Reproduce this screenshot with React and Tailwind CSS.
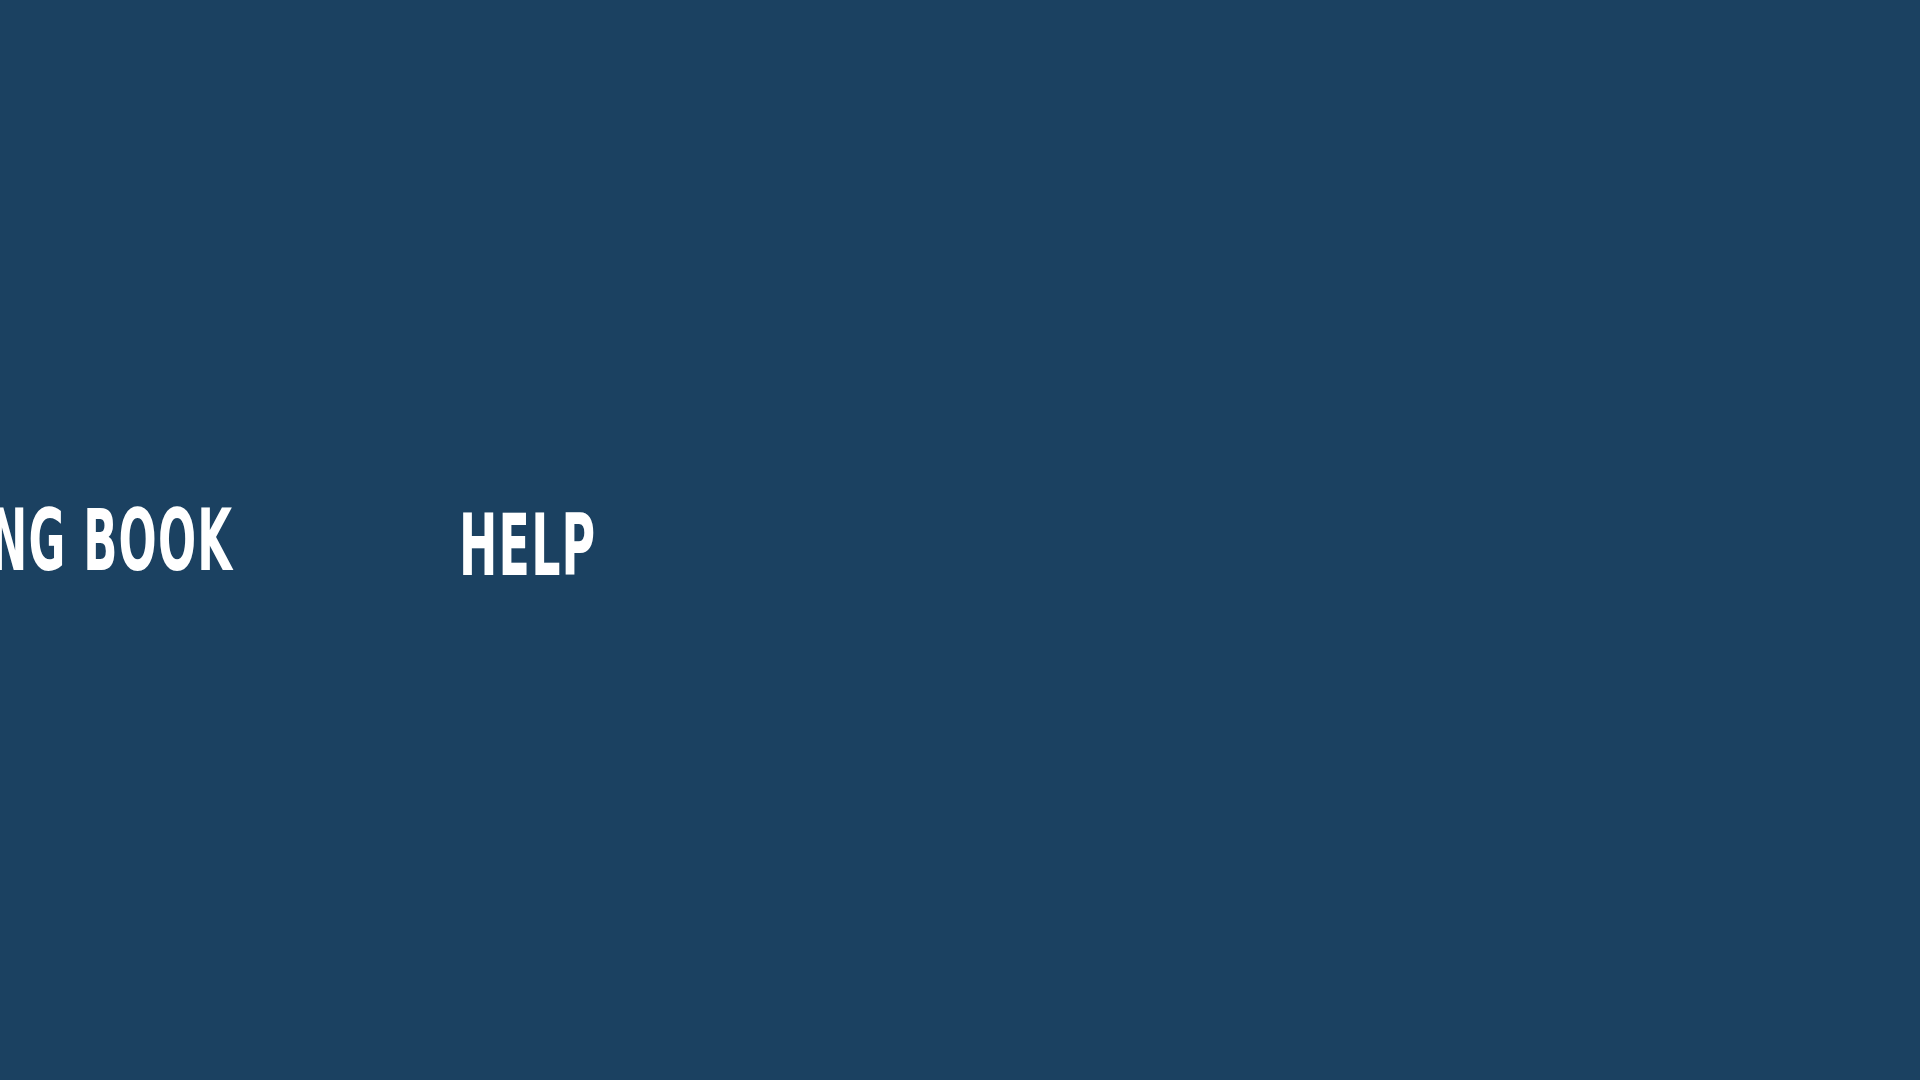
export default function App() {
  return (
    <div className="h-screen w-full overflow-hidden bg-[#1b4161] flex items-center">
      {/* marquee strip, first word runs off the left edge */}
      <div className="w-[233px] shrink-0 flex justify-end">
        <span className="inline-block whitespace-nowrap origin-right scale-x-[0.58] text-white font-bold text-[86px] leading-none tracking-[2px] font-['DejaVu_Sans_Condensed','DejaVu_Sans',sans-serif]">
          TRAINING BOOK
        </span>
      </div>
      <div className="ml-[226px] shrink-0 translate-y-[5px]">
        <span className="inline-block whitespace-nowrap origin-left scale-x-[0.6] text-white font-bold text-[85px] leading-none tracking-[2px] font-['DejaVu_Sans_Condensed','DejaVu_Sans',sans-serif]">
          HELP
        </span>
      </div>
    </div>
  );
}
